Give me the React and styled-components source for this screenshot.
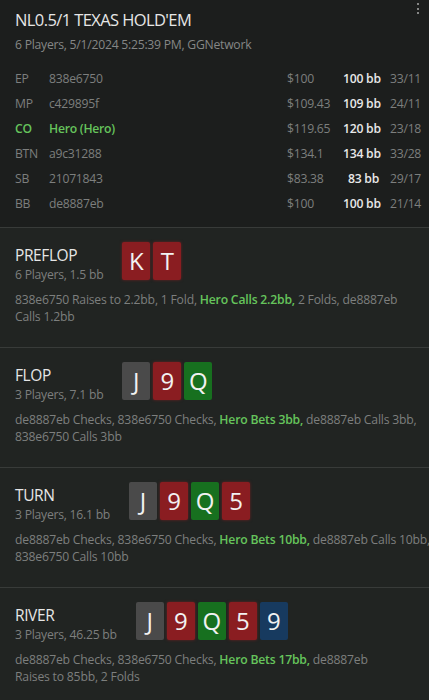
import React from "react";
import styled, { createGlobalStyle } from "styled-components";

const Global = createGlobalStyle`
  html, body { margin: 0; padding: 0; background: #212422; }
  body { font-family: "Open Sans", "Noto Sans", sans-serif; color: #8a8c8b; }
`;

const Page = styled.div`
  width: 429px;
  min-height: 700px;
  background: #212422;
  display: flex;
  flex-direction: column;
`;

const Header = styled.header`
  position: relative;
  background: #1c1e1d;
  padding: 8px 13px 11px 15px;
  border-bottom: 1px solid #383b39;
`;

const Title = styled.h1`
  margin: 0;
  font-size: 16.5px;
  line-height: 24px;
  font-weight: 400;
  color: #e6e6e6;
  letter-spacing: -0.6px;
`;

const Sub = styled.div`
  margin-top: 4px;
  font-size: 12.2px;
  line-height: 18px;
  color: #858786;
  letter-spacing: -0.25px;
`;

const Kebab = styled.div`
  position: absolute;
  top: 3px;
  right: 10px;
  display: flex;
  flex-direction: column;
  gap: 2.5px;
  span {
    width: 2px;
    height: 2px;
    background: #a8aaa9;
    border-radius: 1px;
  }
`;

const Players = styled.div`
  margin-top: 12px;
  display: grid;
  grid-template-columns: 34px 1fr 56px 36px 37px;
  grid-auto-rows: 25px;
  align-items: center;
  font-size: 12.2px;
  letter-spacing: -0.25px;
`;

const Cell = styled.div`
  color: ${(p) => (p.$hero ? "#66c45c" : p.$bright ? "#e8e8e8" : "#7d7f7e")};
  font-weight: ${(p) => (p.$hero || p.$bright ? 600 : 400)};
  text-align: ${(p) => (p.$right ? "right" : "left")};
  padding-left: ${(p) => (p.$pad ? "11px" : "0")};
  white-space: nowrap;
`;

const Section = styled.section`
  padding: 14px 0 22px 15px;
  border-bottom: 1px solid #383b39;
`;

const Head = styled.div`
  display: flex;
  align-items: flex-start;
  gap: 19px;
`;

const StreetInfo = styled.div`
  margin-top: 3px;
  display: flex;
  flex-direction: column;
`;

const Street = styled.div`
  font-size: 15.5px;
  line-height: 20px;
  color: #e6e6e6;
  letter-spacing: -0.4px;
`;

const StreetSub = styled.div`
  margin-top: 1px;
  font-size: 12.2px;
  line-height: 18px;
  color: #7d7f7e;
  letter-spacing: -0.25px;
`;

const Cards = styled.div`
  display: flex;
  gap: 3px;
`;

const suitColor = {
  r: "#8a1d21",
  g: "#4a4a4a",
  c: "#17701f",
  b: "#173a5f",
};

const Card = styled.div`
  width: 28px;
  height: 38px;
  border-radius: 2px;
  background: ${(p) => suitColor[p.$s]};
  color: #f2f2f2;
  font-size: 24px;
  line-height: 38px;
  text-align: center;
  box-shadow: ${(p) => (p.$s === "r" ? "0 0 3px rgba(160,30,35,0.6)" : "none")};
`;

const Actions = styled.div`
  margin-top: 7px;
  font-size: 12.2px;
  line-height: 17px;
  color: #7d7f7e;
  letter-spacing: -0.2px;
`;

const Line = styled.div`
  white-space: nowrap;
`;

const Hero = styled.span`
  color: #66c45c;
  font-weight: 600;
`;

const players = [
  ["EP", "838e6750", "$100", "100 bb", "33/11"],
  ["MP", "c429895f", "$109.43", "109 bb", "24/11"],
  ["CO", "Hero (Hero)", "$119.65", "120 bb", "23/18", true],
  ["BTN", "a9c31288", "$134.1", "134 bb", "33/28"],
  ["SB", "21071843", "$83.38", "83 bb", "29/17"],
  ["BB", "de8887eb", "$100", "100 bb", "21/14"],
];

const streets = [
  {
    name: "PREFLOP",
    sub: "6 Players, 1.5 bb",
    cards: [["K", "r"], ["T", "r"]],
    lines: [
      ["838e6750 Raises to 2.2bb, 1 Fold, ", "Hero Calls 2.2bb,", " 2 Folds, de8887eb"],
      ["Calls 1.2bb"],
    ],
  },
  {
    name: "FLOP",
    sub: "3 Players, 7.1 bb",
    cards: [["J", "g"], ["9", "r"], ["Q", "c"]],
    lines: [
      ["de8887eb Checks, 838e6750 Checks, ", "Hero Bets 3bb,", " de8887eb Calls 3bb,"],
      ["838e6750 Calls 3bb"],
    ],
  },
  {
    name: "TURN",
    sub: "3 Players, 16.1 bb",
    cards: [["J", "g"], ["9", "r"], ["Q", "c"], ["5", "r"]],
    lines: [
      ["de8887eb Checks, 838e6750 Checks, ", "Hero Bets 10bb,", " de8887eb Calls 10bb,"],
      ["838e6750 Calls 10bb"],
    ],
  },
  {
    name: "RIVER",
    sub: "3 Players, 46.25 bb",
    cards: [["J", "g"], ["9", "r"], ["Q", "c"], ["5", "r"], ["9", "b"]],
    lines: [
      ["de8887eb Checks, 838e6750 Checks, ", "Hero Bets 17bb,", " de8887eb"],
      ["Raises to 85bb, 2 Folds"],
    ],
  },
];

export default function App() {
  return (
    <>
      <Global />
      <Page>
        <Header>
          <Kebab>
            <span />
            <span />
            <span />
          </Kebab>
          <Title>NL0.5/1 TEXAS HOLD'EM</Title>
          <Sub>6 Players, 5/1/2024 5:25:39 PM, GGNetwork</Sub>
          <Players>
            {players.map(([pos, name, usd, bb, ratio, hero]) => (
              <React.Fragment key={pos}>
                <Cell $hero={hero}>{pos}</Cell>
                <Cell $hero={hero}>{name}</Cell>
                <Cell>{usd}</Cell>
                <Cell $bright $right>{bb}</Cell>
                <Cell $pad>{ratio}</Cell>
              </React.Fragment>
            ))}
          </Players>
        </Header>
        {streets.map((s) => (
          <Section key={s.name}>
            <Head>
              <StreetInfo>
                <Street>{s.name}</Street>
                <StreetSub>{s.sub}</StreetSub>
              </StreetInfo>
              <Cards>
                {s.cards.map(([r, suit], i) => (
                  <Card key={i} $s={suit}>{r}</Card>
                ))}
              </Cards>
            </Head>
            <Actions>
              {s.lines.map((segs, li) => (
                <Line key={li}>
                  {segs.map((t, i) =>
                    segs.length > 1 && i === 1 ? <Hero key={i}>{t}</Hero> : <React.Fragment key={i}>{t}</React.Fragment>
                  )}
                </Line>
              ))}
            </Actions>
          </Section>
        ))}
      </Page>
    </>
  );
}
